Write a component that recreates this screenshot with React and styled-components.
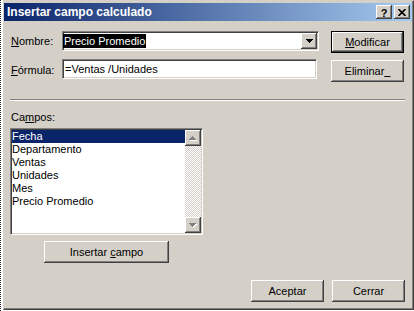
import React from "react";
import styled, { createGlobalStyle, css } from "styled-components";

const Global = createGlobalStyle`
  html, body {
    margin: 0;
    padding: 0;
  }
  body {
    background: #fff;
    font-family: "Liberation Sans", Arial, sans-serif;
    font-size: 11px;
    color: #000;
  }
`;

const raised = css`
  background: #d4d0c8;
  box-shadow: inset -1px -1px #404040, inset 1px 1px #fff,
    inset -2px -2px #808080, inset 2px 2px #d4d0c8;
`;

const sunken = css`
  background: #fff;
  border: 1px solid;
  border-color: #808080 #fff #fff #808080;
  box-shadow: inset 1px 1px #404040, inset -1px -1px #d4d0c8;
`;

const Page = styled.div`
  width: 414px;
  height: 311px;
  overflow: hidden;
  box-sizing: border-box;
  padding-left: 3px;
  background-color: #fff;
  background-image: repeating-linear-gradient(
    to bottom,
    #222 0 1px,
    transparent 1px 2px
  );
  background-size: 1px 100%;
  background-repeat: no-repeat;
`;

const Frame = styled.div`
  width: 411px;
  height: 310px;
  box-sizing: border-box;
  background: #d4d0c8;
  border: 1px solid;
  border-color: #d4d0c8 #404040 #404040 #d4d0c8;
  box-shadow: inset -1px -1px #808080;
  padding: 2px 1px 0 0;
`;

const TitleBar = styled.div`
  height: 18px;
  display: flex;
  align-items: center;
  padding-left: 3px;
  background: linear-gradient(to right, #0a246a, #a6caf0);
  color: #fff;
  font-weight: bold;
  font-size: 12px;
`;

const TitleButtons = styled.div`
  margin-left: auto;
  display: flex;
  gap: 2px;
  padding-right: 2px;
`;

const TitleButton = styled.div`
  ${raised};
  width: 16px;
  height: 14px;
  box-sizing: border-box;
  display: flex;
  align-items: center;
  justify-content: center;
  color: #000;
  font-size: 11px;
  font-weight: bold;
  line-height: 14px;
  padding-top: 1px;
`;

const Client = styled.div`
  padding: 10px 0 0 7px;
`;

const FormGrid = styled.div`
  display: grid;
  grid-template-columns: 51px 269px 73px;
  grid-template-rows: 22px 22px;
  row-gap: 7px;
`;

const Label = styled.label`
  display: block;
  line-height: 13px;
  align-self: ${(p) => p.$align || "center"};
  margin-top: ${(p) => p.$top || 0}px;
`;

const Field = styled.div`
  ${sunken};
  box-sizing: border-box;
  width: ${(p) => p.$w}px;
  height: 20px;
  display: flex;
  align-items: center;
  padding: 0 1px;
  align-self: start;
  margin-top: ${(p) => p.$top || 0}px;
`;

const Selected = styled.span`
  background: #000;
  color: #fff;
  line-height: 14px;
  padding-right: 1px;
  margin-left: -1px;
  padding-left: 1px;
`;

const FieldText = styled.span`
  padding-left: 1px;
  line-height: 14px;
`;

const DropButton = styled.div`
  ${raised};
  margin-left: auto;
  width: 16px;
  height: 16px;
  display: flex;
  align-items: center;
  justify-content: center;
`;

const Button = styled.div`
  ${raised};
  box-sizing: border-box;
  width: ${(p) => p.$w || 73}px;
  height: 22px;
  display: flex;
  align-items: center;
  justify-content: center;
  line-height: 13px;
  ${(p) =>
    p.$default &&
    css`
      border: 1px solid #000;
    `}
`;

const Separator = styled.div`
  margin: 17px 0 0 -1px;
  width: 395px;
  border-top: 1px solid #808080;
  border-bottom: 1px solid #fff;
`;

const ListBox = styled.div`
  ${sunken};
  box-sizing: border-box;
  margin: 4px 0 0 -1px;
  width: 193px;
  height: 107px;
  padding: 1px;
  display: flex;
`;

const Items = styled.div`
  flex: 1;
  display: flex;
  flex-direction: column;
`;

const Item = styled.div`
  height: 13px;
  line-height: 13px;
  white-space: nowrap;
  ${(p) =>
    p.$selected &&
    css`
      background: #0a246a;
      color: #fff;
    `}
`;

const ScrollBar = styled.div`
  width: 16px;
  display: flex;
  flex-direction: column;
`;

const ScrollTrack = styled.div`
  flex: 1;
  background-image: conic-gradient(
    #fff 25%,
    #d4d0c8 0 50%,
    #fff 0 75%,
    #d4d0c8 0
  );
  background-size: 2px 2px;
`;

const ScrollButton = styled.div`
  ${raised};
  width: 16px;
  height: 16px;
`;

const InsertRow = styled.div`
  margin: 6px 0 0 33px;
`;

const Footer = styled.div`
  display: flex;
  justify-content: flex-end;
  gap: 8px;
  padding-right: 7px;
  margin-top: 17px;
`;

const Arrow = ({ dir = "down", color = "#000", shadow }) => {
  const rows = [1, 3, 5, 7];
  const order = dir === "up" ? rows : [...rows].reverse();
  const draw = (dx, dy, fill) =>
    order.map((w, i) => (
      <rect
        key={`${fill}${i}`}
        x={8 - (w + 1) / 2 + dx}
        y={6 + i + dy}
        width={w}
        height={1}
        fill={fill}
      />
    ));
  return (
    <svg width="16" height="16" viewBox="0 0 16 16" shapeRendering="crispEdges">
      {shadow && draw(1, 1, "#fff")}
      {draw(0, 0, color)}
    </svg>
  );
};

const SmallArrow = () => (
  <svg width="7" height="4" viewBox="0 0 7 4" shapeRendering="crispEdges">
    <rect x="0" y="0" width="7" height="1" fill="#000" />
    <rect x="1" y="1" width="5" height="1" fill="#000" />
    <rect x="2" y="2" width="3" height="1" fill="#000" />
    <rect x="3" y="3" width="1" height="1" fill="#000" />
  </svg>
);

const CloseGlyph = () => (
  <svg width="8" height="7" viewBox="0 0 8 7">
    <path d="M0.5 0 L7.5 7 M7.5 0 L0.5 7" stroke="#000" strokeWidth="1.6" />
  </svg>
);

const fields = [
  "Fecha",
  "Departamento",
  "Ventas",
  "Unidades",
  "Mes",
  "Precio Promedio",
];

export default function App() {
  return (
    <>
      <Global />
      <Page>
        <Frame>
          <TitleBar>
            Insertar campo calculado
            <TitleButtons>
              <TitleButton>?</TitleButton>
              <TitleButton>
                <CloseGlyph />
              </TitleButton>
            </TitleButtons>
          </TitleBar>
          <Client>
            <FormGrid>
              <Label $align="start" $top={4}>
                <u>N</u>ombre:
              </Label>
              <Field $w={257}>
                <Selected>Precio Promedio</Selected>
                <DropButton>
                  <SmallArrow />
                </DropButton>
              </Field>
              <Button $default>
                <span>
                  <u>M</u>odificar
                </span>
              </Button>
              <Label $align="start" $top={4}>
                <u>F</u>órmula:
              </Label>
              <Field $w={255} $top={-1}>
                <FieldText>=Ventas /Unidades</FieldText>
              </Field>
              <Button>
                <span>
                  Eliminar<u>&nbsp;&nbsp;</u>
                </span>
              </Button>
            </FormGrid>
            <Separator />
            <Label style={{ marginTop: 10 }}>
              Ca<u>m</u>pos:
            </Label>
            <ListBox>
              <Items>
                {fields.map((f, i) => (
                  <Item key={f} $selected={i === 0}>
                    {f}
                  </Item>
                ))}
              </Items>
              <ScrollBar>
                <ScrollButton>
                  <Arrow dir="up" color="#808080" shadow />
                </ScrollButton>
                <ScrollTrack />
                <ScrollButton>
                  <Arrow dir="down" color="#808080" shadow />
                </ScrollButton>
              </ScrollBar>
            </ListBox>
            <InsertRow>
              <Button $w={125}>
                <span>
                  Insertar <u>c</u>ampo
                </span>
              </Button>
            </InsertRow>
            <Footer>
              <Button>Aceptar</Button>
              <Button>Cerrar</Button>
            </Footer>
          </Client>
        </Frame>
      </Page>
    </>
  );
}
